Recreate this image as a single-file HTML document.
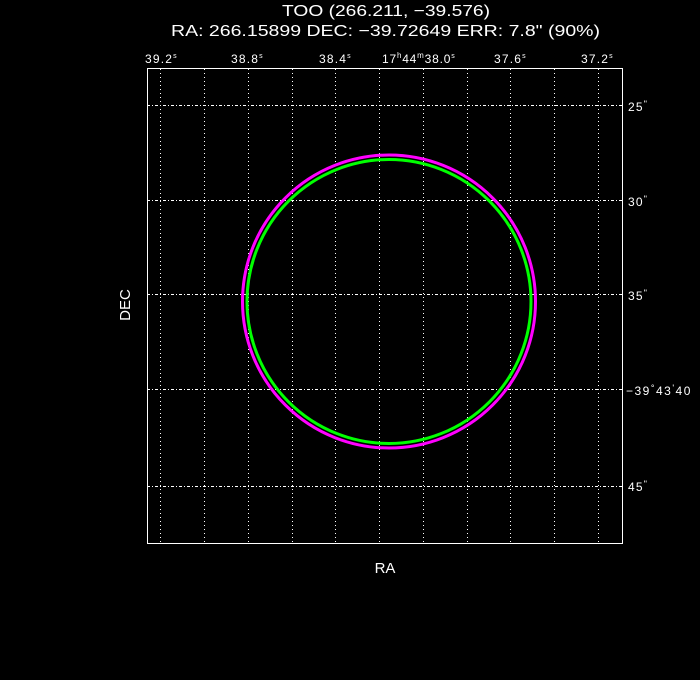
<!DOCTYPE html>
<html><head><style>
html,body{margin:0;padding:0;background:#000;width:700px;height:680px;overflow:hidden}
svg text{font-family:"Liberation Sans","DejaVu Sans",sans-serif;fill:#fff}
</style></head><body>
<svg width="700" height="680" xmlns="http://www.w3.org/2000/svg">
<rect width="700" height="680" fill="#000"/>
<text x="282" y="16" font-size="16" textLength="208" lengthAdjust="spacingAndGlyphs">TOO (266.211, −39.576)</text>
<text x="171" y="36" font-size="16" textLength="429" lengthAdjust="spacingAndGlyphs">RA: 266.15899   DEC: −39.72649   ERR: 7.8" (90%)</text>
<g font-size="12" letter-spacing="1.2">
<text x="145" y="63">39.2<tspan font-size="7" dy="-5">s</tspan></text>
<text x="231" y="63">38.8<tspan font-size="7" dy="-5">s</tspan></text>
<text x="319" y="63">38.4<tspan font-size="7" dy="-5">s</tspan></text>
<text x="382" y="63" letter-spacing="0.8">17<tspan font-size="8" dy="-5">h</tspan><tspan dy="5">44</tspan><tspan font-size="8" dy="-5">m</tspan><tspan dy="5">38.0</tspan><tspan font-size="7" dy="-5">s</tspan></text>
<text x="494" y="63">37.6<tspan font-size="7" dy="-5">s</tspan></text>
<text x="581" y="63">37.2<tspan font-size="7" dy="-5">s</tspan></text>
<text x="628" y="111">25<tspan font-size="9" dy="-4">"</tspan></text>
<text x="628" y="206">30<tspan font-size="9" dy="-4">"</tspan></text>
<text x="628" y="300">35<tspan font-size="9" dy="-4">"</tspan></text>
<text x="626" y="395" letter-spacing="1.5">−39<tspan font-size="9" dy="-4">°</tspan><tspan dy="4">43</tspan><tspan font-size="9" dy="-4">'</tspan><tspan dy="4">40</tspan></text>
<text x="628" y="491">45<tspan font-size="9" dy="-4">"</tspan></text>
</g>
<text x="385" y="573" font-size="15" text-anchor="middle">RA</text>
<text x="0" y="0" font-size="15" text-anchor="middle" transform="translate(130,305) rotate(-90)">DEC</text>
<g stroke="#fff" stroke-width="1" stroke-dasharray="1 3">
<line x1="160.5" y1="69" x2="160.5" y2="543"/>
<line x1="204.5" y1="69" x2="204.5" y2="543"/>
<line x1="248.5" y1="69" x2="248.5" y2="543"/>
<line x1="292.5" y1="69" x2="292.5" y2="543"/>
<line x1="335.5" y1="69" x2="335.5" y2="543"/>
<line x1="379.5" y1="69" x2="379.5" y2="543"/>
<line x1="423.5" y1="69" x2="423.5" y2="543"/>
<line x1="467.5" y1="69" x2="467.5" y2="543"/>
<line x1="510.5" y1="69" x2="510.5" y2="543"/>
<line x1="554.5" y1="69" x2="554.5" y2="543"/>
<line x1="598.5" y1="69" x2="598.5" y2="543"/>
</g>
<g stroke="#fff" stroke-width="1" stroke-dasharray="3 2 1 2">
<line x1="147" y1="105.5" x2="622" y2="105.5"/>
<line x1="147" y1="200.5" x2="622" y2="200.5"/>
<line x1="147" y1="294.5" x2="622" y2="294.5"/>
<line x1="147" y1="389.5" x2="622" y2="389.5"/>
<line x1="147" y1="486.5" x2="622" y2="486.5"/>
</g>
<rect x="147.5" y="68.5" width="475" height="475" fill="none" stroke="#fff" stroke-width="1"/>
<circle cx="389" cy="301.5" r="146.5" fill="none" stroke="#ff00ff" stroke-width="3"/>
<circle cx="389" cy="301.5" r="142" fill="none" stroke="#00ff00" stroke-width="3"/>
</svg>
</body></html>
